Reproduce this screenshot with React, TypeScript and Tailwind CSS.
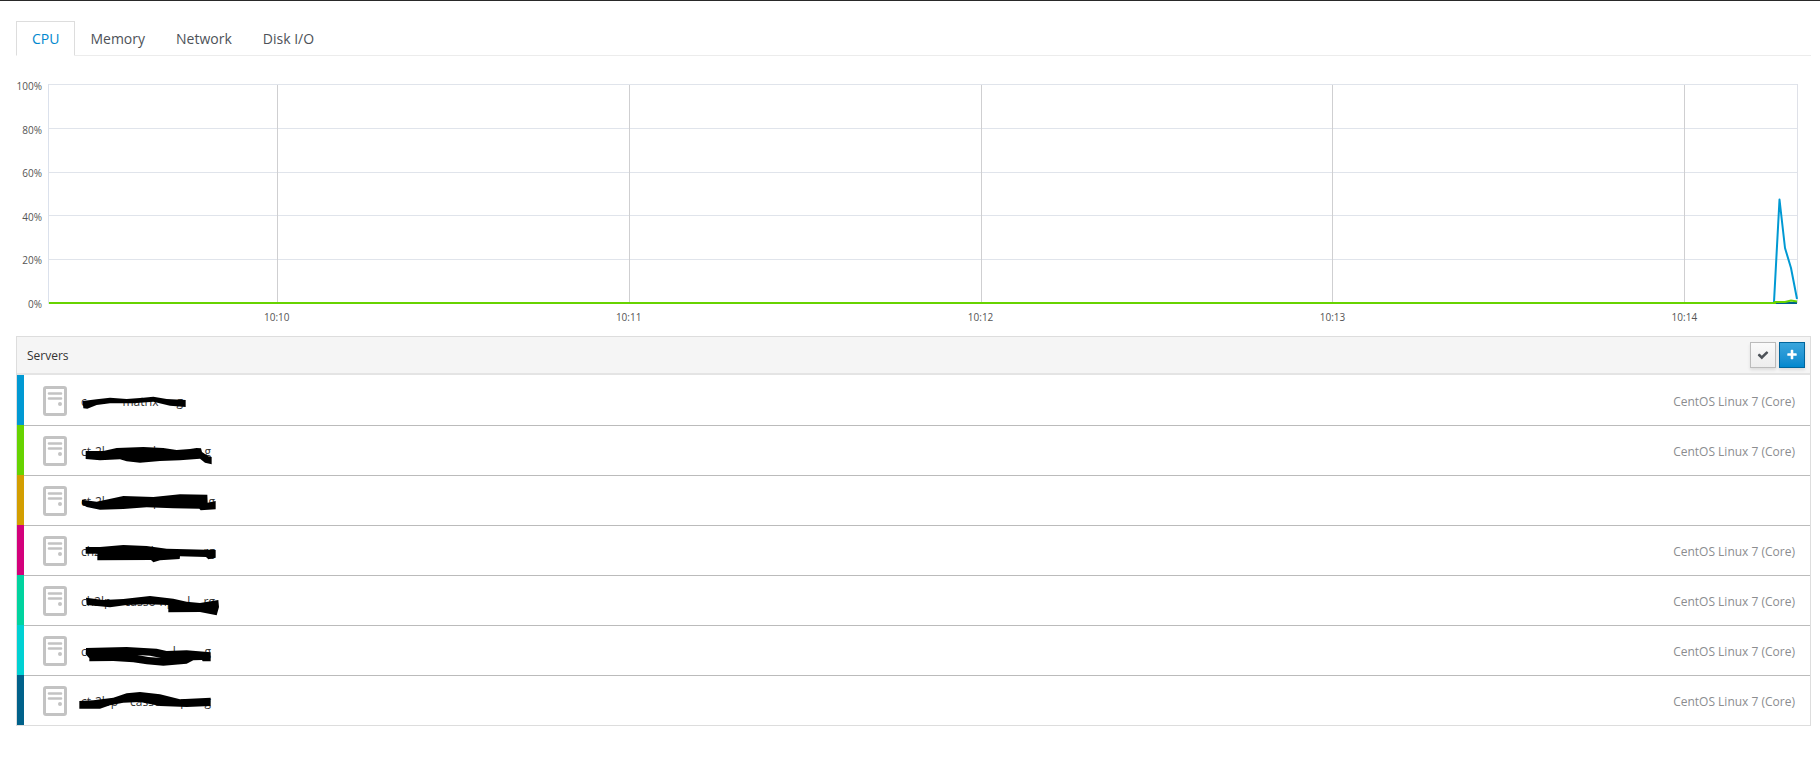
import { useState } from "react";

type Server = {
  color: string;
  name: string[];
  width: string;
  marker: string;
  gap?: string;
  os?: string;
};

const CENTOS = "CentOS Linux 7 (Core)";

const tabs = ["CPU", "Memory", "Network", "Disk I/O"];

const times = ["10:10", "10:11", "10:12", "10:13", "10:14"];

const percents = [100, 80, 60, 40, 20, 0];

// marker paths are drawn on a 450x150 grid over the host name
const servers: Server[] = [
  {
    color: "bg-[#0099d3]",
    name: ["c", "", "matrix", "g"],
    width: "w-[102px]",
    marker:
      "M23 75 L65 70 105 65 155 69 205 65 235 62 275 69 332 72 V93 L285 89 235 77 175 82 105 82 65 87 37 98 25 97Z",
    os: CENTOS,
  },
  {
    color: "bg-[#67d300]",
    name: ["ct-2l", "l", "g"],
    width: "w-[130px]",
    marker:
      "M32 75 L85 75 125 66 205 63 265 66 305 72 345 69 365 66 378 67 381 78 400 91 410 93 410 115 390 110 375 98 315 103 255 105 195 110 155 106 135 100 75 103 32 99Z",
    os: CENTOS,
  },
  {
    color: "bg-[#d39e00]",
    name: ["ct-2l", "p", "g"],
    width: "w-[134px]",
    marker:
      "M21 71 L65 77 145 60 235 63 315 55 397 56 398 80 422 75 422 100 377 103 373 98 295 97 215 94 145 99 75 101 35 93 21 85Z",
  },
  {
    color: "bg-[#d3007b]",
    name: ["ch2", "l", "rg"],
    width: "w-[134px]",
    marker:
      "M32 63 L75 63 145 57 215 60 275 68 335 70 422 72 422 95 400 100 393 93 315 91 314 99 255 103 235 109 228 102 67 103 67 83 32 83Z",
    os: CENTOS,
  },
  {
    color: "bg-[#00d39f]",
    name: ["ch2lp", "casso-np", "l", "rg"],
    width: "w-[134px]",
    marker:
      "M33 65 L85 72 145 69 225 60 295 68 335 77 375 81 430 72 432 93 425 118 375 108 280 109 280 87 215 85 155 87 105 94 35 87Z",
    os: CENTOS,
  },
  {
    color: "bg-[#00d1d3]",
    name: ["c", "", "", "l", "g"],
    width: "w-[130px]",
    marker:
      "M33 66 L155 63 245 68 275 75 335 73 407 79 407 106 383 106 381 102 355 103 335 113 265 119 215 115 175 109 115 105 43 106 43 97 32 85Z",
    gap: "M187 87 L225 89 258 96 220 93Z",
    os: CENTOS,
  },
  {
    color: "bg-[#00618a]",
    name: ["ct-2lvp", "cassoo", "p", "rg"],
    width: "w-[130px]",
    marker:
      "M13 75 L55 73 115 65 155 52 195 48 255 55 315 70 407 65 407 90 335 93 255 90 195 78 145 80 105 88 75 98 13 98Z",
    os: CENTOS,
  },
];

const ServerIcon = () => (
  <svg className="h-[30px] w-6 shrink-0" viewBox="0 0 24 30" fill="none">
    <rect x="1.5" y="1.5" width="21" height="27" rx="1.5" stroke="#c3c3c3" strokeWidth="3" />
    <path d="M6 7.5h12M6 12.5h12" stroke="#c3c3c3" strokeWidth="2.6" strokeLinecap="round" />
    <circle cx="17" cy="18" r="2" fill="#c3c3c3" />
  </svg>
);

const Chart = () => (
  <div className="mt-7 pr-[14px] pl-8">
    <svg
      className="block h-[252px] w-full overflow-visible text-[10px]"
      role="img"
      aria-label="CPU usage"
    >
      <g shapeRendering="crispEdges">
        {percents.map((p) => (
          <line
            key={p}
            x1="0"
            x2="100%"
            y1={219.4 - p * 2.19}
            y2={219.4 - p * 2.19}
            stroke="#e0e4eb"
          />
        ))}
        {times.map((t, i) => (
          <line
            key={t}
            x1={`${13.11 + i * 20.12}%`}
            x2={`${13.11 + i * 20.12}%`}
            y1="1"
            y2="219"
            stroke="#cfcfd1"
          />
        ))}
        <line x1="0.5" x2="0.5" y1="0" y2="219" stroke="#dbe1ec" />
        <line x1="100%" x2="100%" y1="0" y2="219" stroke="#dfe1e8" />
      </g>
      {percents.map((p) => (
        <text key={p} x="-6" y={224 - p * 2.18} textAnchor="end" fill="#545454">
          {p}%
        </text>
      ))}
      {times.map((t, i) => (
        <text key={t} x={`${13.08 + i * 20.12}%`} y="237" textAnchor="middle" fill="#545454">
          {t}
        </text>
      ))}
      <svg x="100%" overflow="visible" fill="none" strokeWidth="2">
        <path d="M-23 218L-17.500 115.500L-12 164L-6 184L0 215" stroke="#0099d3" strokeLinejoin="round" />
        <path d="M-23 219H0" stroke="#00618a" strokeWidth="2" />
        <path d="M-23 218H-12L-6 216.500L0 217.500" stroke="#67d300" />
      </svg>
      <line x1="1" x2="98.800%" y1="219" y2="219" stroke="#67d300" strokeWidth="2" />
    </svg>
  </div>
);

export default function App() {
  const [active, setActive] = useState("CPU");

  return (
    <main
      className="border-t border-[#292929] bg-white pt-5 pr-[9px] pl-4 text-[#333]"
      style={{ fontFamily: '"Open Sans", sans-serif' }}
    >
      <nav className="flex border-b border-[#ececec]">
        {tabs.map((tab) => (
          <button
            key={tab}
            onClick={() => setActive(tab)}
            className={`-mr-px -mb-px h-[35px] border px-[15px] text-[14px] leading-5 ${
              active === tab
                ? "border-[#ddd] border-b-white bg-white text-[#0088ce]"
                : "border-transparent text-[#4d5258]"
            }`}
          >
            {tab}
          </button>
        ))}
      </nav>

      <Chart />

      <section className="border border-[#ddd]">
        <header className="flex h-[38px] items-center justify-between border-b-2 border-[#e4e4e4] bg-[#f5f5f5] pr-[5px] pl-[10px]">
          <h2 className="pt-0.5 text-[12px] leading-5">Servers</h2>
          <div className="flex gap-[3px]">
            <button
              aria-label="Edit servers"
              className="flex size-[26px] items-center justify-center border border-[#bbb] bg-linear-to-b from-[#fafafa] to-[#ededed] text-[#4d5258] shadow-[0_2px_3px_rgba(3,3,3,0.1)]"
            >
              <svg className="size-3" viewBox="0 0 1792 1792" fill="currentColor">
                <path d="M1671 566q0 40-28 68l-724 724-136 136q-28 28-68 28t-68-28l-136-136-362-362q-28-28-28-68t28-68l136-136q28-28 68-28t68 28l294 295 656-657q28-28 68-28t68 28l136 136q28 28 28 68z" />
              </svg>
            </button>
            <button
              aria-label="Add server"
              className="flex size-[26px] items-center justify-center border border-[#00659c] bg-linear-to-b from-[#39a5dc] to-[#0088ce] text-white shadow-[0_2px_3px_rgba(3,3,3,0.1)]"
            >
              <svg className="size-3" viewBox="0 0 1792 1792" fill="currentColor">
                <path d="M1600 736v192q0 40-28 68t-68 28h-416v416q0 40-28 68t-68 28h-192q-40 0-68-28t-28-68v-416h-416q-40 0-68-28t-28-68v-192q0-40 28-68t68-28h416v-416q0-40 28-68t68-28h192q40 0 68 28t28 68v416h416q40 0 68 28t28 68z" />
              </svg>
            </button>
          </div>
        </header>

        <ul>
          {servers.map((server, i) => (
            <li key={i} className="flex h-[50px]">
              <div className={`w-[7px] ${server.color}`}></div>
              <div
                className={`flex flex-1 items-center border-t pr-[15px] pl-[19px] text-[12px] leading-5 ${
                  i === 0 ? "border-transparent" : "border-[#bbb]"
                }`}
              >
                <ServerIcon />
                <div className="relative ml-[14px] pt-0.5">
                  <p className={`flex justify-between ${server.width}`}>
                    {server.name.map((part, n) => (
                      <span key={n}>{part}</span>
                    ))}
                  </p>
                  <svg
                    className="absolute -top-[14px] -left-1.5 h-[50px] w-[150px]"
                    viewBox="0 0 450 150"
                  >
                    <path d={server.marker} fill="#000" />
                    {server.gap && <path d={server.gap} fill="#fff" />}
                  </svg>
                </div>
                <span className="ml-auto pt-0.5 text-[#8b8d8f]">{server.os}</span>
              </div>
            </li>
          ))}
        </ul>
      </section>
    </main>
  );
}
